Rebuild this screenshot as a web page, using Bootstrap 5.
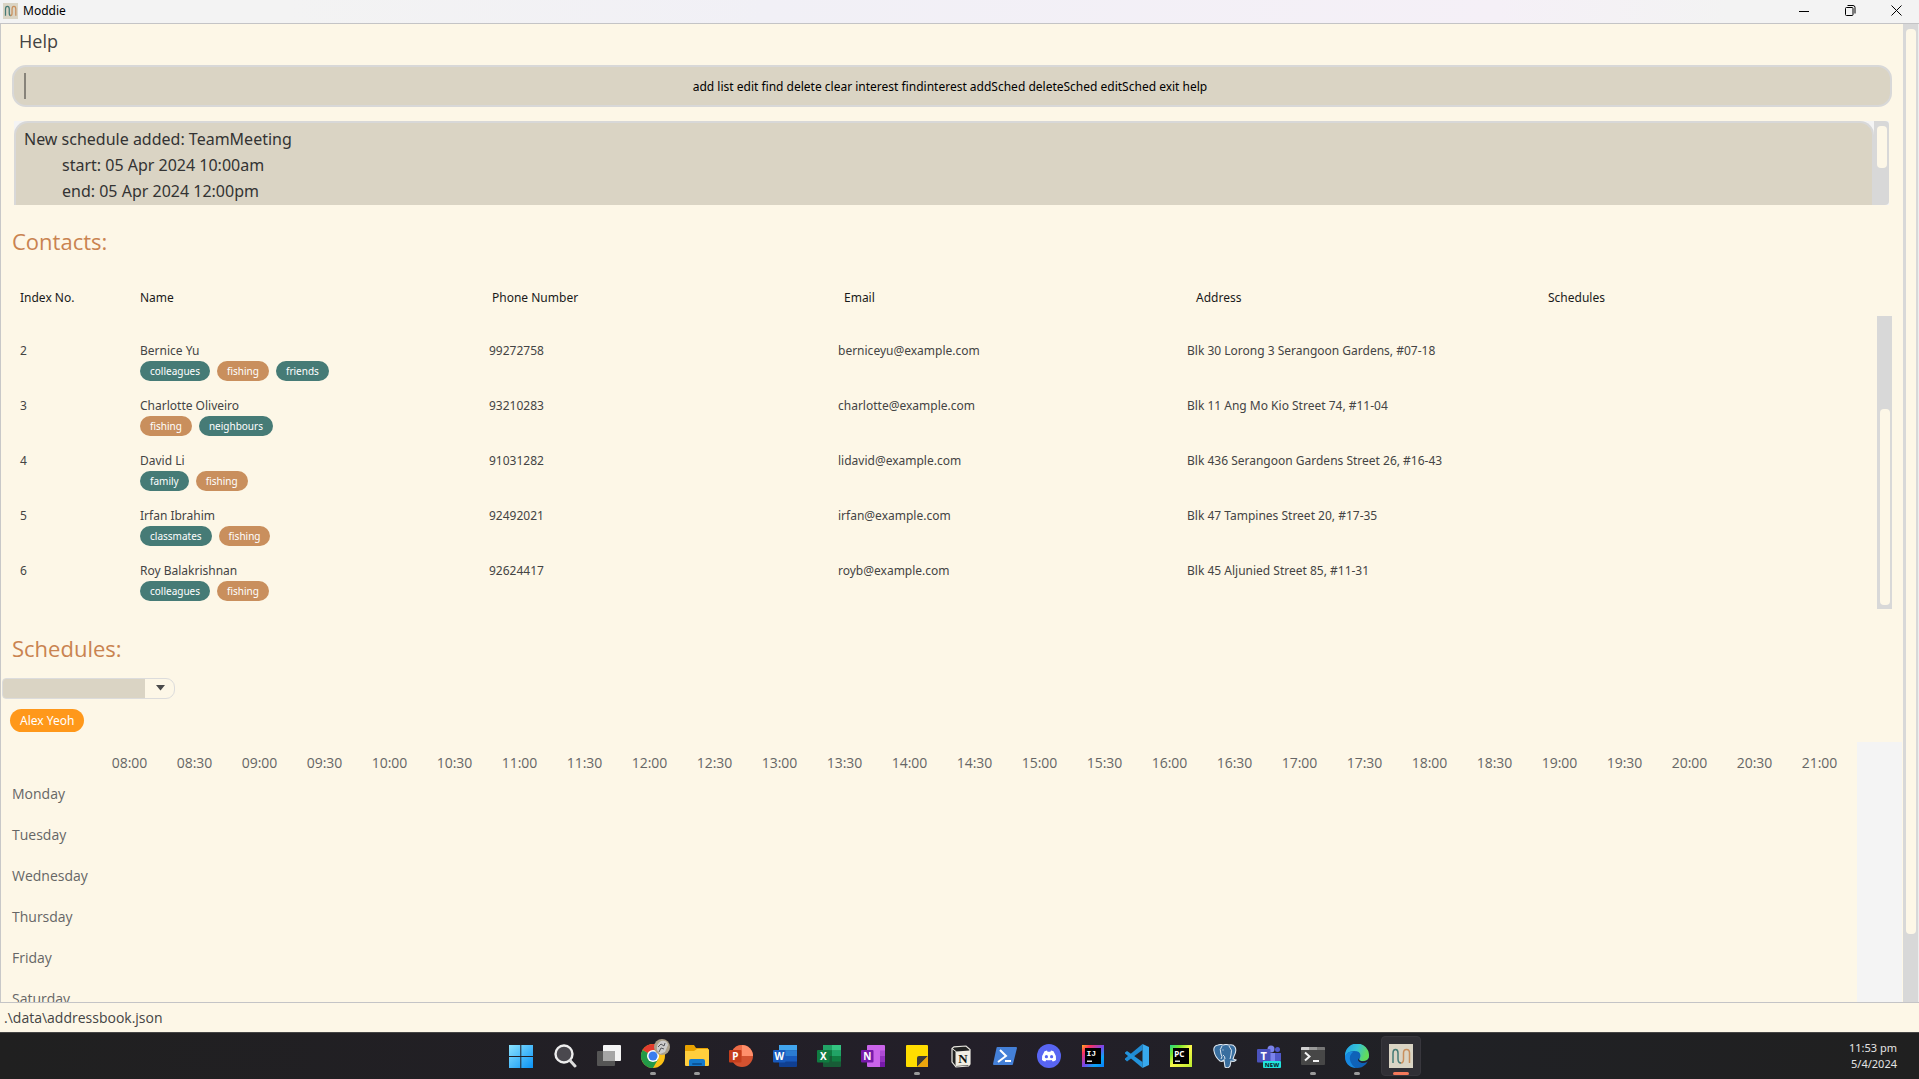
<!DOCTYPE html>
<html lang="en">
<head>
<meta charset="utf-8">
<meta name="viewport" content="width=device-width, initial-scale=1">
<title>Moddie</title>
<link rel="stylesheet" href="https://cdn.jsdelivr.net/npm/bootstrap@5.3.0/dist/css/bootstrap.min.css">
<style>
  :root { --cream: #fdf7e7; --sand: #dad4c4; --rail: #d8d8d8; --teal: #467b76; --tan: #c98f5d; --ink: #444; }
  body { font-family: "Noto Sans", "Open Sans", sans-serif; font-size: 12px; line-height: 20px; color: var(--ink); background: var(--cream); }
  .titlebar { height: 24px; padding-bottom: 2px; color: #000; border-bottom: 1px solid #c4c4c6; background: linear-gradient(90deg, #f3f3f3 15%, #f1f0f6 40%, #f5f0f7 78%, #f3f3f3 90%); }
  .app-logo { margin: 0 5px 0 3px; }
  .win-btn { width: 46px; height: 20px; }
  .scene { border-left: 1px solid #c8c8c8; border-right: 1px solid #eee; min-height: 0; }
  .help-btn { font-family: "Open Sans", sans-serif; font-size: 18px; line-height: 26px; color: var(--ink); padding: 0 14px; }
  .cmd-row { margin: 11px 11px 0; }
  .cmd-input, .cmd-input:focus { height: 42px; border: 2px solid var(--rail); border-radius: 14px; background: var(--sand); box-shadow: none; text-align: center; font-size: 12px; padding: 0 16px 0 12px; }
  .cmd-input::placeholder { color: #000; opacity: 1; }
  .caret-bar { left: 12px; top: 8px; width: 2px; height: 26px; background: #87837a; }
  .result-wrap { height: 84px; background: #f4f4f4; margin: 14px 14px 0 13px; }
  .result-box { border: 2px solid var(--rail); border-bottom: 0; border-radius: 14px 14px 0 0; background: var(--sand); color: #333; font-size: 16px; line-height: 26px; padding: 3px 8px 0; resize: none; overflow: hidden; tab-size: 38px; outline: 0; }
  .rail { width: 15px; background: var(--rail); padding: 5px 2px 4px 3px; flex: none; }
  .thumb { background: var(--cream); border-radius: 4px; }
  .heading { font-family: "Open Sans", sans-serif; font-size: 22px; line-height: 34px; font-weight: 400; color: #c98350; }
  .contact-pane { padding: 19px 11px 0; }
  .contacts thead tr, .contacts tbody tr { display: grid; grid-template-columns: 120px repeat(5, 1fr); }
  .contacts th { font-weight: 400; color: #1a1a1a; padding: 30px 8px 8px; }
  .contacts td { padding: 7px 8px 8px; }
  .contacts .list-rows { padding-top: 18px; margin-right: 15px; }
  .list-rail { height: 293px; }
  .tags { display: flex; gap: 7px; }
  .tag { border-radius: 10px; padding: 0 10px; font-size: 10px; line-height: 20px; color: #fff; }
  .tag-teal { background: var(--teal); }
  .tag-tan { background: var(--tan); }
  .sched-title { padding: 22px 11px 0; }
  .picker { width: 173px; height: 21px; margin: 13px 0 0 1px; }
  .picker select { appearance: none; border: 1px solid #dcdcdc; border-radius: 4px 9px 9px 4px; background: linear-gradient(90deg, var(--sand) 142px, var(--cream) 142px); outline: 0; }
  .picker svg { right: 10px; top: 7px; pointer-events: none; }
  .person { background: #ff981a; color: #fff; border-radius: 12px; line-height: 23px; padding: 0 10px; margin: 10px 0 10px 9px; }
  .plan-wrap { background: #f4f4f4; padding-right: 45px; margin-right: 1px; min-height: 0; }
  .plan-bg { background: var(--cream); padding: 0 5px 0 11px; }
  .plan { table-layout: fixed; font-family: "Open Sans", sans-serif; font-size: 14px; color: #666; }
  .plan th { font-weight: 400; padding: 0; }
  .plan .day-col { width: 85px; }
  .plan thead th { height: 31px; padding-top: 10px; text-align: center; }
  .plan tbody th { height: 41px; }
  .plan td { padding: 0; }
  .statusbar { height: 30px; border-top: 1px solid #c4c4c6; padding: 0 4px; font-family: "Open Sans", sans-serif; font-size: 14px; }
  .taskbar { height: 47px; border-top: 1px solid #454545; background: linear-gradient(90deg, #202020, #231f29 50%, #202125 75%, #202020); padding-left: 2px; }
  .task { width: 44px; height: 46px; padding-bottom: 2px !important; }
  .task svg { width: 24px; height: 24px; }
  .task::after { content: ""; left: 19px; top: 39px; width: 6px; height: 3px; border-radius: 2px; position: absolute; }
  .task.running::after { background: #9a9a9a; }
  .task.current::before { content: ""; position: absolute; left: 2px; top: 3px; width: 40px; height: 40px; border-radius: 4px; background: #302f35; border: 1px solid #38373d; }
  .task.current svg { position: relative; }
  .task.current::after { background: #f4795b; width: 16px; left: 14px; }
  .clock { right: 22px; top: 7px; font-size: 11px; line-height: 16px; color: #e4e4e4; }
</style>
</head>
<body class="vh-100 d-flex flex-column overflow-hidden">

<header class="titlebar d-flex align-items-center flex-shrink-0">
  <svg class="app-logo" width="15" height="16" viewBox="0 0 24 24" preserveAspectRatio="none"><rect width="24" height="24" fill="#dad4c4"/><path d="M4 19V9q0-4 3-4t3 4v6q0 4 2.500 4" fill="none" stroke="#467b76" stroke-width="2"/><path d="M12 19q2.500 0 2.500-4V9q0-4 3-4t3 4v10" fill="none" stroke="#c98f5d" stroke-width="2"/></svg>
  <span>Moddie</span>
  <div class="ms-auto d-flex">
    <button class="win-btn btn border-0 p-0 d-flex align-items-center justify-content-center" aria-label="Minimise"><svg width="10" height="10"><path d="M0 5.500h10" stroke="#000"/></svg></button>
    <button class="win-btn btn border-0 p-0 d-flex align-items-center justify-content-center" aria-label="Restore"><svg width="11" height="11" fill="none" stroke="#000"><rect x=".5" y="2.500" width="7.500" height="8" rx="1"/><path d="M2.500 .5H8q2 0 2 2V8.500"/></svg></button>
    <button class="win-btn btn border-0 p-0 d-flex align-items-center justify-content-center" aria-label="Close"><svg width="11" height="11"><path d="M.5 .5l10 10M10.500 .5l-10 10" stroke="#000"/></svg></button>
  </div>
</header>

<div class="scene d-flex flex-fill">
  <main class="flex-fill d-flex flex-column overflow-hidden">
    <nav class="px-1 pt-1"><button class="help-btn btn border-0 rounded-0">Help</button></nav>

    <div class="cmd-row position-relative">
      <input id="cmd" class="cmd-input form-control" aria-label="Command" placeholder="add list edit find delete clear interest findinterest addSched deleteSched editSched exit help">
      <span class="caret-bar position-absolute"></span>
    </div>

    <div class="result-wrap d-flex flex-shrink-0">
      <textarea id="result" class="result-box flex-fill" aria-label="Result" readonly>New schedule added: TeamMeeting
	start: 05 Apr 2024 10:00am
	end: 05 Apr 2024 12:00pm</textarea>
      <div class="rail rounded-end-1"><div class="thumb" style="height:56%"></div></div>
    </div>

    <section class="contact-pane">
      <h2 class="heading mb-0">Contacts:</h2>
      <div class="position-relative">
        <table class="contacts d-block">
          <thead class="d-block"><tr><th>Index No.</th><th>Name</th><th>Phone Number</th><th>Email</th><th>Address</th><th>Schedules</th></tr></thead>
          <tbody class="list-rows d-block">
            <tr><td>2</td><td>Bernice Yu<div class="tags"><span class="tag tag-teal">colleagues</span><span class="tag tag-tan">fishing</span><span class="tag tag-teal">friends</span></div></td><td>99272758</td><td>berniceyu@example.com</td><td>Blk 30 Lorong 3 Serangoon Gardens, #07-18</td><td></td></tr>
            <tr><td>3</td><td>Charlotte Oliveiro<div class="tags"><span class="tag tag-tan">fishing</span><span class="tag tag-teal">neighbours</span></div></td><td>93210283</td><td>charlotte@example.com</td><td>Blk 11 Ang Mo Kio Street 74, #11-04</td><td></td></tr>
            <tr><td>4</td><td>David Li<div class="tags"><span class="tag tag-teal">family</span><span class="tag tag-tan">fishing</span></div></td><td>91031282</td><td>lidavid@example.com</td><td>Blk 436 Serangoon Gardens Street 26, #16-43</td><td></td></tr>
            <tr><td>5</td><td>Irfan Ibrahim<div class="tags"><span class="tag tag-teal">classmates</span><span class="tag tag-tan">fishing</span></div></td><td>92492021</td><td>irfan@example.com</td><td>Blk 47 Tampines Street 20, #17-35</td><td></td></tr>
            <tr><td>6</td><td>Roy Balakrishnan<div class="tags"><span class="tag tag-teal">colleagues</span><span class="tag tag-tan">fishing</span></div></td><td>92624417</td><td>royb@example.com</td><td>Blk 45 Aljunied Street 85, #11-31</td><td></td></tr>
          </tbody>
        </table>
        <div class="list-rail rail position-absolute end-0 bottom-0 d-flex flex-column justify-content-end"><div class="thumb" style="height:69%"></div></div>
      </div>
    </section>

    <section class="d-flex flex-column flex-fill overflow-hidden">
      <h2 class="heading sched-title mb-0">Schedules:</h2>
      <div class="picker position-relative flex-shrink-0">
        <select id="who" class="w-100 h-100 d-block" aria-label="Person"><option></option></select>
        <svg class="position-absolute" width="9" height="6"><path d="M0 0h9L4.500 5.500z" fill="#4a4a4a"/></svg>
      </div>
      <div><span class="person d-inline-block align-top">Alex Yeoh</span></div>
      <div class="plan-wrap flex-fill overflow-hidden">
        <div class="plan-bg">
          <table class="plan w-100">
            <thead><tr><th class="day-col"></th><th>08:00</th><th>08:30</th><th>09:00</th><th>09:30</th><th>10:00</th><th>10:30</th><th>11:00</th><th>11:30</th><th>12:00</th><th>12:30</th><th>13:00</th><th>13:30</th><th>14:00</th><th>14:30</th><th>15:00</th><th>15:30</th><th>16:00</th><th>16:30</th><th>17:00</th><th>17:30</th><th>18:00</th><th>18:30</th><th>19:00</th><th>19:30</th><th>20:00</th><th>20:30</th><th>21:00</th></tr></thead>
            <tbody>
              <tr><th>Monday</th><td colspan="27"></td></tr>
              <tr><th>Tuesday</th><td colspan="27"></td></tr>
              <tr><th>Wednesday</th><td colspan="27"></td></tr>
              <tr><th>Thursday</th><td colspan="27"></td></tr>
              <tr><th>Friday</th><td colspan="27"></td></tr>
              <tr><th>Saturday</th><td colspan="27"></td></tr>
            </tbody>
          </table>
        </div>
      </div>
    </section>
  </main>
  <div class="rail"><div class="thumb" style="height:93.4%"></div></div>
</div>

<footer class="statusbar d-flex align-items-center flex-shrink-0">.\data\addressbook.json</footer>

<div class="taskbar position-relative d-flex justify-content-center flex-shrink-0">
  <button class="task btn border-0 p-0 position-relative" aria-label="Start"><svg viewBox="0 0 24 24"><defs><linearGradient id="g1" x2="1" y2="1"><stop stop-color="#8be3ff"/><stop offset="1" stop-color="#0a93f5"/></linearGradient></defs><path d="M0 1h11.300v11H0zM12.300 1H24v11H12.300zM0 13h11.300v11H0zM12.300 13H24v11H12.300z" fill="url(#g1)"/></svg></button>
  <button class="task btn border-0 p-0 position-relative" aria-label="Search"><svg viewBox="0 0 24 24"><circle cx="11" cy="10" r="8.500" fill="#4a484e" stroke="#eee" stroke-width="2.400"/><path d="M17 16.500l5 5.500" stroke="#ddd" stroke-width="3" stroke-linecap="round"/></svg></button>
  <button class="task btn border-0 p-0 position-relative" aria-label="Task view"><svg viewBox="0 0 24 24"><rect x="6" y="1" width="18" height="16" rx="1" fill="#f4f4f4"/><rect y="7" width="18" height="15" rx="1" fill="#555"/><path d="M6 7h12v10H6z" fill="#a5a5a5"/></svg></button>
  <button class="task running btn border-0 p-0 position-relative" aria-label="Chrome"><svg viewBox="0 0 24 24" overflow="visible"><circle cx="12" cy="12" r="12" fill="#fbc116"/><path d="M12 12L1.600 6A12 12 0 0 1 22.400 6z" fill="#e33b2e"/><path d="M12 12L1.600 6A12 12 0 0 0 12 24L17.200 15z" fill="#229a48"/><path d="M12 12h10.400A12 12 0 0 0 22.400 6H12z" fill="#fbc116"/><circle cx="12" cy="12" r="6" fill="#fff"/><circle cx="12" cy="12" r="4.500" fill="#3b7ded"/><circle cx="21" cy="3" r="8" fill="#aaa08b"/><path d="M16 6q-1-6 4-9 6-1 7 4l-3 7-5 2z" fill="#ccc"/><path d="M17 3l3-3 3 2 1-3M18 8l2-4 3 1" stroke="#55565a" fill="none"/></svg></button>
  <button class="task running btn border-0 p-0 position-relative" aria-label="Explorer"><svg viewBox="0 0 24 24"><path d="M0 2q0-1 1-1h8l2 3h12v6H0z" fill="#e8a200"/><path d="M0 7h9l3-2h11q1 0 1 1v15q0 1-1 1H1q-1 0-1-1z" fill="#ffce3d"/><path d="M4 22v-5q0-2 2-2h12q2 0 2 2v5z" fill="#1479cc"/><rect x="7" y="19" width="10" height="2" rx="1" fill="#0b5599"/></svg></button>
  <button class="task btn border-0 p-0 position-relative" aria-label="PowerPoint"><svg viewBox="0 0 24 24"><circle cx="13" cy="12" r="11" fill="#d35230"/><path d="M13 1a11 11 0 0 1 11 11H13z" fill="#ff8f6b"/><path d="M13 1v11H2A11 11 0 0 1 13 1z" fill="#ed6c47"/><rect y="6" width="12.500" height="12.500" rx="1" fill="#c43e1c"/><text x="6.300" y="15.800" text-anchor="middle" font-size="10" font-weight="700" fill="#fff">P</text></svg></button>
  <button class="task btn border-0 p-0 position-relative" aria-label="Word"><svg viewBox="0 0 24 24"><rect x="6" y="1" width="18" height="22" rx="1" fill="#103f91"/><path d="M6 1h18v5.500H6z" fill="#41a5ee"/><path d="M6 6.500h18V12H6z" fill="#2b7cd3"/><path d="M6 12h18v5.500H6z" fill="#185abd"/><rect y="6" width="12.500" height="12.500" rx="1" fill="#185abd"/><text x="6.300" y="15.800" text-anchor="middle" font-size="10" font-weight="700" fill="#fff">W</text></svg></button>
  <button class="task btn border-0 p-0 position-relative" aria-label="Excel"><svg viewBox="0 0 24 24"><rect x="6" y="1" width="18" height="22" rx="1" fill="#185c37"/><path d="M6 1h9v5.500H6zM15 6.500h9V12h-9z" fill="#21a366"/><path d="M15 1h9v5.500h-9z" fill="#33c481"/><path d="M6 6.500h9V12H6zM15 12h9v5.500h-9z" fill="#107c41"/><rect y="6" width="12.500" height="12.500" rx="1" fill="#107c41"/><text x="6.300" y="15.800" text-anchor="middle" font-size="10" font-weight="700" fill="#fff">X</text></svg></button>
  <button class="task btn border-0 p-0 position-relative" aria-label="OneNote"><svg viewBox="0 0 24 24"><rect x="6" y="1" width="18" height="22" rx="1" fill="#ca64ea"/><path d="M19 6.500h5V12h-5z" fill="#ae4bd5"/><path d="M19 12h5v5.500h-5z" fill="#9332bf"/><path d="M19 17.500h5V23h-5z" fill="#7719aa"/><rect y="6" width="12.500" height="12.500" rx="1" fill="#7719aa"/><text x="6.300" y="15.800" text-anchor="middle" font-size="10" font-weight="700" fill="#fff">N</text></svg></button>
  <button class="task running btn border-0 p-0 position-relative" aria-label="Sticky Notes"><svg viewBox="0 0 24 24"><path d="M1 2q0-1 1-1h20q1 0 1 1v21H2q-1 0-1-1z" fill="#ffdd00"/><path d="M12 23V14q0-2 2-2h9z" fill="#3c3a38"/><path d="M12 23l11-11v11z" fill="#eda60d"/></svg></button>
  <button class="task btn border-0 p-0 position-relative" aria-label="Notion"><svg viewBox="0 0 24 24"><path d="M3 4.500L5 2.800 17 2l4 3.500v14.500l-1.500 2-12.500 1L3 18z" fill="#222" stroke="#e8e6df" stroke-width="1.200"/><path d="M7 7.500L21 6.500v14.500l-14 1z" fill="#f1eee4"/><path d="M3 4.500L7 7.500v15" fill="none" stroke="#e8e6df"/><text x="14" y="18.500" text-anchor="middle" font-family="Liberation Serif, serif" font-size="13" font-weight="700" fill="#111">N</text></svg></button>
  <button class="task btn border-0 p-0 position-relative" aria-label="PowerShell"><svg viewBox="0 0 24 24"><path d="M4.500 3H23q1 0 1 1l-4 16q0 1-1 1H1q-1 0-1-1L3.500 4q0-1 1-1z" fill="#4480d8"/><path d="M7 6l6 6-8 6M12 17h6" fill="none" stroke="#fff" stroke-width="2"/></svg></button>
  <button class="task btn border-0 p-0 position-relative" aria-label="Discord"><svg viewBox="0 0 24 24"><circle cx="12" cy="12" r="12" fill="#5865f2"/><path d="M7.500 7.300L10 6.500l.6 1.200h2.800L14 6.500l2.500.8Q19.500 11.500 19 16q-1.500 1.300-3.300 1.500l-1-1.500q-2.700.7-5.400 0l-1 1.500Q6.500 17.300 5 16q-.5-4.500 2.500-8.700z" fill="#fff"/><circle cx="9.400" cy="12.700" r="1.600" fill="#5865f2"/><circle cx="14.600" cy="12.700" r="1.600" fill="#5865f2"/></svg></button>
  <button class="task btn border-0 p-0 position-relative" aria-label="IntelliJ"><svg viewBox="0 0 24 24"><defs><linearGradient id="g2" x2="1" y2="1"><stop stop-color="#ffb020"/><stop offset=".2" stop-color="#fe315d"/><stop offset=".5" stop-color="#7a45e8"/><stop offset=".75" stop-color="#0aa5f5"/><stop offset="1" stop-color="#087cfa"/></linearGradient></defs><rect x="1" y="1" width="22" height="22" fill="url(#g2)"/><rect x="4" y="4" width="16" height="16" fill="#000"/><text x="5.500" y="12" font-family="Liberation Mono, monospace" font-size="8" font-weight="700" fill="#fff">IJ</text><path d="M6 17.200h5" stroke="#fff" stroke-width="1.300" fill="none"/></svg></button>
  <button class="task btn border-0 p-0 position-relative" aria-label="VS Code"><svg viewBox="0 0 24 24"><path d="M17.500 6L2 17.500 0 15.500v-1L17.500 0z" fill="#1f8ad2"/><path d="M17.500 18L2 7 0 8.500v1L17.500 24z" fill="#2394dc"/><path d="M17.500 0L24 3v18l-6.500 3z" fill="#37a9ee"/></svg></button>
  <button class="task btn border-0 p-0 position-relative" aria-label="PyCharm"><svg viewBox="0 0 24 24"><defs><linearGradient id="g3" x2="1" y2="1"><stop stop-color="#21d789"/><stop offset=".25" stop-color="#78e52d"/><stop offset=".5" stop-color="#fcf84a"/><stop offset="1" stop-color="#b8ea2e"/></linearGradient></defs><rect x="1" y="1" width="22" height="22" fill="url(#g3)"/><rect x="4" y="4" width="16" height="16" fill="#000"/><text x="5.300" y="12.500" font-size="8" font-weight="700" fill="#fff">PC</text><path d="M6 17.200h5" stroke="#fff" stroke-width="1.300"/></svg></button>
  <button class="task btn border-0 p-0 position-relative" aria-label="PostgreSQL"><svg viewBox="0 0 24 24"><path d="M5 1q3-1 5 0 3-1 6 0 4-1 6 2 2 4-1 9l-1 3 3 1q-2 2-5 1l-1 5q-2 3-5 1l-1-7q-2 2-4 1Q2 13 1 7 0 2 5 1z" fill="#386e9f" stroke="#dce6ef" stroke-width="1.100"/><path d="M9 2Q6 5 8 10q2 3 0 5M16 2q4 4 2 9l-1 4M12 15q0-3-2-4M9.500 6h1" fill="none" stroke="#dce6ef" stroke-width="1"/></svg></button>
  <button class="task btn border-0 p-0 position-relative" aria-label="Teams"><svg viewBox="0 0 24 24"><circle cx="14" cy="5" r="3.500" fill="#7b83eb"/><circle cx="20.500" cy="5.500" r="2.500" fill="#5059c9"/><path d="M17 9h7v7q-1 4-6 4z" fill="#5059c9"/><path d="M8 9h10v12H8z" fill="#7b83eb"/><rect y="5" width="13.500" height="13.500" rx="1" fill="#4b53bc"/><text x="6.800" y="15.500" text-anchor="middle" font-size="11" font-weight="700" fill="#fff">T</text><rect x="6" y="17" width="18" height="7" rx="1" fill="#22e3dc"/><text x="15" y="22.800" text-anchor="middle" font-size="6" font-weight="800" fill="#082b33">NEW</text></svg></button>
  <button class="task running btn border-0 p-0 position-relative" aria-label="Terminal"><svg viewBox="0 0 24 24"><rect y="3" width="24" height="18" rx="1" fill="#474747"/><path d="M0 6V4q0-1 1-1h7v3z" fill="#d0d0d0"/><path d="M8 3h8v3H8z" fill="#999"/><path d="M16 3h7q1 0 1 1v2h-8z" fill="#777"/><path d="M4 8.500l4.500 4L4 16.500M12 17h6" fill="none" stroke="#f4f4f4" stroke-width="2"/></svg></button>
  <button class="task running btn border-0 p-0 position-relative" aria-label="Edge"><svg viewBox="0 0 24 24"><defs><linearGradient id="g4" x2="1" y2=".3"><stop stop-color="#1d9fe8"/><stop offset=".55" stop-color="#36c2d4"/><stop offset="1" stop-color="#62dd5a"/></linearGradient></defs><circle cx="12" cy="12" r="12" fill="#0f62b8"/><path d="M0 11A12 12 0 0 1 24 12q0 5-6 5-5 0-3-3 2-7-6-7Q2 7 0 13z" fill="url(#g4)"/><path d="M0 12q3-5 8-4-4 3-3 8 1 5 6 8Q0 23 0 12z" fill="#1788df"/><path d="M14 14q-3 3 3 5 3 0 5-1l-.500 1L24 16v-2q-3 4-8 3-3-1-2-3z" fill="#231f29"/></svg></button>
  <button class="task current btn border-0 p-0 position-relative" aria-label="Moddie"><svg viewBox="0 0 24 24"><rect width="24" height="24" fill="#dad4c4"/><path d="M4 19V9q0-3.500 2.500-3.500T9 9v6q0 4 3 4" fill="none" stroke="#467b76" stroke-width="1.500"/><path d="M12 19q2.500 0 2.500-4V9q0-3.500 3-3.500t3 3.500v10" fill="none" stroke="#c98f5d" stroke-width="1.500"/></svg></button>
  <div class="clock position-absolute text-end"><div>11:53 pm</div><div>5/4/2024</div></div>
</div>

<script src="https://cdn.jsdelivr.net/npm/bootstrap@5.3.0/dist/js/bootstrap.bundle.min.js"></script>
</body>
</html>
